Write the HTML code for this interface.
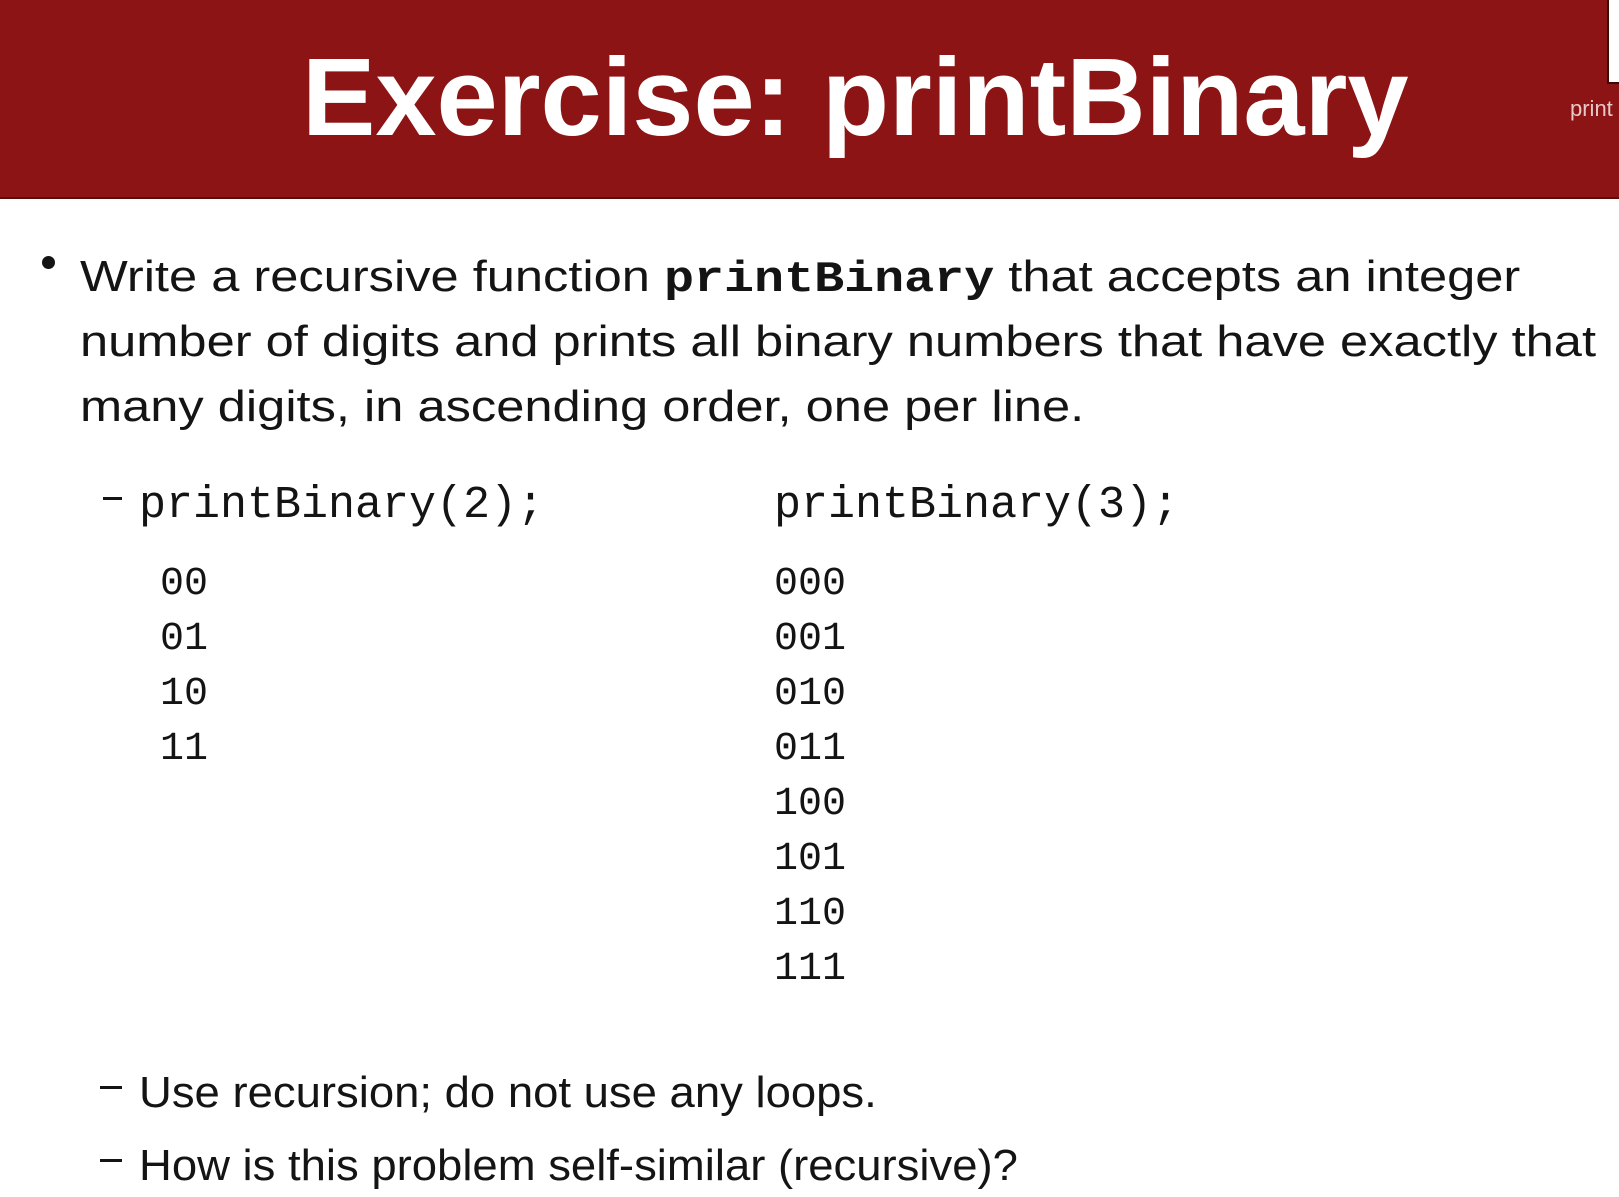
<!DOCTYPE html>
<html><head><meta charset="utf-8"><style>
html,body{margin:0;padding:0;background:#fff;}
body{width:1619px;height:1197px;position:relative;overflow:hidden;font-family:"Liberation Sans",sans-serif;color:#141414;}
.hdr{position:absolute;left:0;top:0;width:1619px;height:197px;background:#8c1414;border-bottom:2px solid #5a0d0d;}
.title{position:absolute;left:302px;top:38px;font-weight:bold;font-size:110px;color:#fff;line-height:120px;white-space:nowrap;}
.box{position:absolute;left:1607px;top:0;width:12px;height:82px;background:#fff;border-left:2px solid #3a0a0a;border-bottom:2px solid #3a0a0a;}
.side{position:absolute;left:1570px;top:96px;font-size:22px;color:#e8c8c8;white-space:nowrap;}
.t{position:absolute;white-space:nowrap;font-size:44px;line-height:50px;transform-origin:0 0;}
.s{transform:scaleX(1.15);}
.s2{transform:scaleX(1.033);}
.m{font-family:"Liberation Mono",monospace;}
.code{position:absolute;white-space:nowrap;font-family:"Liberation Mono",monospace;font-size:45px;line-height:50px;}
.d{position:absolute;white-space:nowrap;font-family:"Liberation Mono",monospace;font-size:40px;line-height:50px;}
.dash{position:absolute;height:3px;background:#141414;}
.bullet{position:absolute;left:42px;top:256px;width:13px;height:13px;border-radius:50%;background:#141414;}
</style></head><body>
<div class="hdr"></div>
<div class="title">Exercise: printBinary</div>
<div class="box"></div>
<div class="side">print</div>

<div class="bullet"></div>
<div class="t s" style="left:80px;top:252px;">Write a recursive function <b class="m" style="font-size:43.5px;">printBinary</b> that accepts an integer</div>
<div class="t s" style="left:80px;top:317px;">number of digits and prints all binary numbers that have exactly that</div>
<div class="t s" style="left:80px;top:382px;">many digits, in ascending order, one per line.</div>

<div class="dash" style="left:103px;top:497px;width:19px;"></div>
<div class="code" style="left:139px;top:481px;">printBinary(2);</div>
<div class="code" style="left:774px;top:481px;">printBinary(3);</div>

<div class="d" style="left:160px;top:560px;">00</div>
<div class="d" style="left:160px;top:615px;">01</div>
<div class="d" style="left:160px;top:670px;">10</div>
<div class="d" style="left:160px;top:725px;">11</div>

<div class="d" style="left:774px;top:560px;">000</div>
<div class="d" style="left:774px;top:615px;">001</div>
<div class="d" style="left:774px;top:670px;">010</div>
<div class="d" style="left:774px;top:725px;">011</div>
<div class="d" style="left:774px;top:780px;">100</div>
<div class="d" style="left:774px;top:835px;">101</div>
<div class="d" style="left:774px;top:890px;">110</div>
<div class="d" style="left:774px;top:945px;">111</div>

<div class="dash" style="left:100px;top:1086px;width:22px;"></div>
<div class="t s2" style="left:139px;top:1068px;">Use recursion; do not use any loops.</div>
<div class="dash" style="left:100px;top:1159px;width:22px;"></div>
<div class="t s2" style="left:139px;top:1141px;">How is this problem self-similar (recursive)?</div>
</body></html>
